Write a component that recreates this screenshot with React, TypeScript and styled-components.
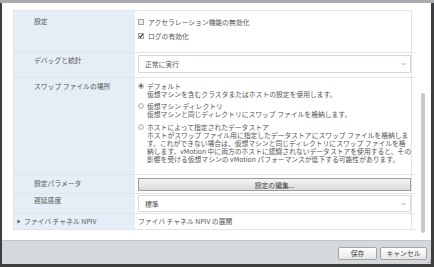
import styled, { createGlobalStyle } from "styled-components";

const GlobalStyle = createGlobalStyle`
  html, body {
    margin: 0;
    padding: 0;
    background: #3d3e40;
  }
  body {
    font-family: "Noto Sans CJK JP", "Noto Sans", sans-serif;
  }
`;

const Page = styled.div`
  width: 434px;
  height: 267px;
  display: flex;
  flex-direction: column;
  background: #3d3e40;
`;

const TopBand = styled.div`
  height: 3px;
  background: #a9adb1;
`;

const Dialog = styled.div`
  flex: 1;
  margin: 0 3px 3px 2px;
  display: flex;
  flex-direction: column;
  background: #fff;
`;

const Content = styled.div`
  flex: 1;
  display: flex;
`;

const TableWrap = styled.div`
  padding: 7px 0 0 11px;
`;

const Table = styled.div`
  width: 397px;
  border: 1px solid #dfe5ea;
  border-bottom: none;
  display: grid;
  grid-template-columns: 121px 1fr;
  font-size: 6.8px;
  color: #555;
`;

const Label = styled.div<{ $top?: number }>`
  background: #e5eef6;
  border-bottom: 1px solid #dfe5ea;
  padding: ${(p) => p.$top ?? 4}px 0 0 20px;
  line-height: 9px;
  white-space: nowrap;
`;

const ExpandLabel = styled(Label)`
  padding-left: 3px;
  display: flex;
  align-items: flex-start;
  gap: 3px;
`;

const Value = styled.div<{ $pad: string }>`
  border-bottom: 1px solid #dfe5ea;
  padding: ${(p) => p.$pad};
  display: flex;
  flex-direction: column;
`;

const CheckRow = styled.div`
  height: 14px;
  display: flex;
  align-items: center;
  gap: 4px;
  white-space: nowrap;
`;

const Select = styled.div<{ $h: number }>`
  height: ${(p) => p.$h}px;
  box-sizing: border-box;
  border: 1px solid #d3d7db;
  border-radius: 1px;
  background: #fff;
  display: flex;
  align-items: center;
  justify-content: space-between;
  padding: 0 4px 0 6px;
  color: #555;
`;

const Option = styled.div<{ $mt: number }>`
  margin-top: ${(p) => p.$mt}px;
  display: grid;
  grid-template-columns: 5px 1fr;
  column-gap: 4px;
  line-height: 8px;
  white-space: nowrap;
`;

const OptionText = styled.div`
  display: flex;
  flex-direction: column;
`;

const WideButton = styled.div`
  height: 13px;
  box-sizing: border-box;
  border: 1px solid #9c9c9c;
  background: linear-gradient(#f4f4f4, #dcdcdc);
  display: flex;
  align-items: center;
  justify-content: center;
  color: #444;
`;

const PlainText = styled.div`
  line-height: 9px;
  padding-top: 3px;
  white-space: nowrap;
`;

const ScrollCol = styled.div`
  width: 20px;
  padding: 90px 0 0 9px;
  box-sizing: border-box;
`;

const Thumb = styled.div`
  width: 4px;
  height: 140px;
  border-radius: 2px;
  background: #c8c9cb;
`;

const Footer = styled.div`
  height: 24px;
  background: #d6d9dc;
  border-top: 1px solid #c4c7ca;
  box-sizing: border-box;
  display: flex;
  align-items: center;
  justify-content: flex-end;
  gap: 3px;
  padding: 1px 4px 0 0;
  position: relative;
`;

const FooterButton = styled.div<{ $w: number }>`
  width: ${(p) => p.$w}px;
  height: 13px;
  box-sizing: border-box;
  border: 1px solid #a2a4a6;
  border-radius: 2px;
  background: linear-gradient(#ffffff, #e6e7e8);
  display: flex;
  align-items: center;
  justify-content: center;
  font-size: 6.8px;
  color: #444;
`;

const Grip = styled.svg`
  position: absolute;
  right: 0;
  bottom: 0;
`;

const Checkbox = ({ checked }: { checked?: boolean }) => (
  <svg width="6" height="6" viewBox="0 0 6 6">
    <rect x="0.5" y="0.5" width="5" height="5" fill={checked ? "#fff" : "#eceef0"} stroke="#9ea3a8" />
    {checked && <polyline points="1.3,3 2.5,4.3 4.8,1.2" fill="none" stroke="#333" strokeWidth="1.1" />}
  </svg>
);

const Radio = ({ checked }: { checked?: boolean }) => (
  <svg width="6" height="6" viewBox="0 0 6 6" style={{ marginTop: 1 }}>
    <circle cx="3" cy="3" r="2.5" fill="#eef0f2" stroke="#a3a7ab" strokeWidth="0.8" />
    {checked && <circle cx="3" cy="3" r="1.4" fill="#555" />}
  </svg>
);

const Chevron = () => (
  <svg width="5" height="4" viewBox="0 0 5 4">
    <polyline points="0.5,1 2.5,3 4.5,1" fill="none" stroke="#999" strokeWidth="0.8" />
  </svg>
);

const Caret = () => (
  <svg width="4" height="5" viewBox="0 0 4 5" style={{ marginTop: 2 }}>
    <polygon points="0.5,0.5 3.5,2.5 0.5,4.5" fill="#555" />
  </svg>
);

export default function App() {
  return (
    <Page>
      <GlobalStyle />
      <TopBand />
      <Dialog>
        <Content>
          <TableWrap>
            <Table>
              <Label $top={6}>設定</Label>
              <Value $pad="4px 4px 9px 3px">
                <CheckRow>
                  <Checkbox />
                  アクセラレーション機能の無効化
                </CheckRow>
                <CheckRow>
                  <Checkbox checked />
                  ログの有効化
                </CheckRow>
              </Value>

              <Label $top={3}>デバッグと統計</Label>
              <Value $pad="2px 4px 4px 3px">
                <Select $h={18}>
                  正常に実行
                  <Chevron />
                </Select>
              </Value>

              <Label $top={4}>スワップ ファイルの場所</Label>
              <Value $pad="0 4px 11px 3px">
                <Option $mt={4}>
                  <Radio checked />
                  <OptionText>
                    <span>デフォルト</span>
                    <span>仮想マシンを含むクラスタまたはホストの設定を使用します。</span>
                  </OptionText>
                </Option>
                <Option $mt={4}>
                  <Radio />
                  <OptionText>
                    <span>仮想マシン ディレクトリ</span>
                    <span>仮想マシンと同じディレクトリにスワップ ファイルを格納します。</span>
                  </OptionText>
                </Option>
                <Option $mt={5}>
                  <Radio />
                  <OptionText>
                    <span>ホストによって指定されたデータストア</span>
                    <span>ホストがスワップ ファイル用に指定したデータストアにスワップ ファイルを格納しま</span>
                    <span>す。これができない場合は、仮想マシンと同じディレクトリにスワップ ファイルを格</span>
                    <span>納します。vMotion 中に両方のホストに認識されないデータストアを使用すると、その</span>
                    <span>影響を受ける仮想マシンの vMotion パフォーマンスが低下する可能性があります。</span>
                  </OptionText>
                </Option>
              </Value>

              <Label $top={4}>設定パラメータ</Label>
              <Value $pad="3px 4px 2px 3px">
                <WideButton>設定の編集...</WideButton>
              </Value>

              <Label $top={2}>遅延感度</Label>
              <Value $pad="1px 4px 1px 3px">
                <Select $h={17}>
                  標準
                  <Chevron />
                </Select>
              </Value>

              <ExpandLabel $top={3}>
                <Caret />
                ファイバ チャネル NPIV
              </ExpandLabel>
              <Value $pad="0 4px 3px 3px">
                <PlainText>ファイバ チャネル NPIV の展開</PlainText>
              </Value>
            </Table>
          </TableWrap>
          <ScrollCol>
            <Thumb />
          </ScrollCol>
        </Content>
        <Footer>
          <FooterButton $w={39}>保存</FooterButton>
          <FooterButton $w={47}>キャンセル</FooterButton>
          <Grip width="4" height="4" viewBox="0 0 4 4">
            <rect x="3" y="0" width="1" height="1" fill="#888" />
            <rect x="1" y="2" width="1" height="1" fill="#888" />
            <rect x="3" y="2" width="1" height="1" fill="#888" />
          </Grip>
        </Footer>
      </Dialog>
    </Page>
  );
}
